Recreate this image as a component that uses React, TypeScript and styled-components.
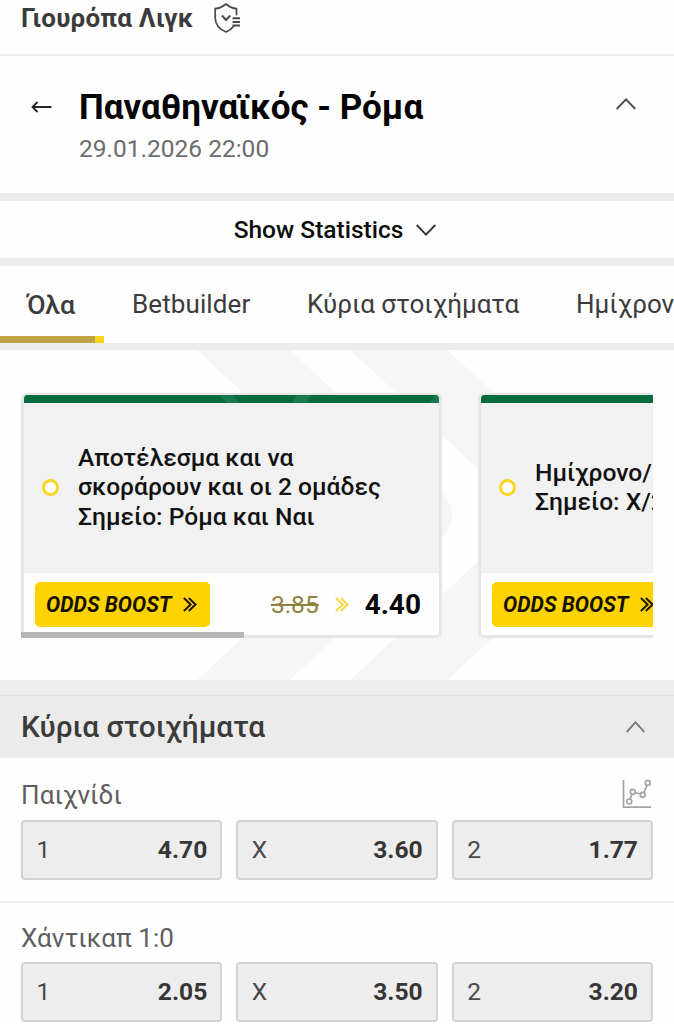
import React from "react";
import styled, { createGlobalStyle, css } from "styled-components";

const GlobalStyle = createGlobalStyle`
  * { box-sizing: border-box; }
  html, body { margin: 0; padding: 0; background: #fefefe; }
  body { font-family: Roboto, "Liberation Sans", sans-serif; color: #3b3b3b; overflow: hidden; }
  svg { display: block; flex: none; }
`;

const Page = styled.main`
  width: 674px;
  height: 1024px;
  overflow: hidden;
  display: flex;
  flex-direction: column;
  background: #fefefe;
`;

const Text = styled.span<{ $size: number; $weight?: number; $color?: string; $spacing?: number }>`
  font-size: ${(p) => p.$size}px;
  font-weight: ${(p) => p.$weight ?? 400};
  color: ${(p) => p.$color ?? "#3b3b3b"};
  letter-spacing: ${(p) => p.$spacing ?? 0}px;
  white-space: nowrap;
`;

const LeagueBar = styled.header`
  flex: none;
  height: 56px;
  padding: 0 0 18px 21px;
  display: flex;
  align-items: center;
  gap: 21px;
  border-bottom: 2px solid #ececec;
`;

const MatchHeader = styled.section`
  flex: none;
  height: 137px;
  padding: 31px 38px 0 31px;
  display: flex;
  align-items: flex-start;
`;

const BackButton = styled.div`
  width: 48px;
  padding-top: 12px;
`;

const MatchInfo = styled.div`
  flex: 1;
  display: flex;
  flex-direction: column;
`;

const MatchTitle = styled.h1`
  margin: 1px 0 0;
  font-size: 35px;
  line-height: 40px;
  font-weight: 700;
  color: #050505;
  white-space: nowrap;
`;

const MatchDate = styled.div`
  margin-top: 7px;
  font-size: 24.5px;
  line-height: 28px;
  color: #6c6c6c;
`;

const CollapseSlot = styled.div`
  padding-top: 11px;
`;

const Divider = styled.div<{ $height: number }>`
  flex: none;
  height: ${(p) => p.$height}px;
  background: #ececec;
`;

const StatsToggle = styled.section`
  flex: none;
  height: 57px;
  display: flex;
  align-items: center;
  justify-content: center;
  gap: 13px;
  padding-right: 4px;
`;

const TabBar = styled.nav`
  flex: none;
  height: 77px;
  display: flex;
  overflow: hidden;
`;

const Tab = styled.div<{ $width: number; $active?: boolean }>`
  flex: none;
  width: ${(p) => p.$width}px;
  height: 77px;
  padding: 0 0 1px 28px;
  display: flex;
  align-items: center;
  ${(p) => p.$active && css`
    border-bottom: 7px solid;
    border-image: linear-gradient(to right, #bfa445 94px, #fbd51d 94px) 1;
    padding: 6px 0 0 27px;
  `}
`;

const Carousel = styled.section`
  flex: none;
  position: relative;
  height: 330px;
  padding: 43px 21px 0;
`;

const Watermark = styled.svg`
  position: absolute;
  inset: 0;
`;

const CardTrack = styled.div`
  position: relative;
  display: flex;
  gap: 36px;
  overflow: hidden;
`;

const Card = styled.article`
  flex: none;
  width: 421px;
  height: 245px;
  border: 3px solid #e6e6e6;
  border-top-width: 2px;
  border-radius: 6px;
  overflow: hidden;
  display: flex;
  flex-direction: column;
  background: #fefefe;
`;

const CardAccent = styled.div`
  flex: none;
  height: 8px;
  background: #056c3b;
`;

const CardBody = styled.div`
  flex: none;
  height: 170px;
  padding: 0 0 2px 18px;
  display: flex;
  align-items: center;
  gap: 19px;
  background: #f1f1f1;
`;

const Dot = styled.div`
  flex: none;
  width: 17px;
  height: 17px;
  border: 3px solid #fbd51d;
  border-radius: 50%;
  background: #fff;
`;

const CardLines = styled.div`
  display: flex;
  flex-direction: column;
  line-height: 29.4px;
`;

const CardFooter = styled.div`
  flex: 1;
  padding: 0 18px 0 11px;
  display: flex;
  align-items: center;
  justify-content: space-between;
`;

const BoostBadge = styled.div`
  width: 175px;
  height: 45px;
  padding-left: 11px;
  border-radius: 5px;
  background: #ffd300;
  display: flex;
  align-items: center;
  gap: 11px;
  font-size: 21.2px;
  font-weight: 700;
  font-style: italic;
  color: #141000;
  white-space: nowrap;
`;

const PriceChange = styled.div`
  display: flex;
  align-items: center;
  gap: 16px;
`;

const OldPrice = styled.span`
  font-size: 24.5px;
  color: #8f8240;
  text-decoration: line-through;
  text-decoration-thickness: 2px;
`;

const ScrollThumb = styled.div`
  position: absolute;
  left: 0;
  bottom: 0;
  width: 223px;
  height: 6px;
  background: #b5b5b5;
`;

const GroupHeader = styled.section`
  flex: none;
  height: 63px;
  padding: 0 29px 0 21px;
  border-top: 1px solid #e0e0e0;
  border-bottom: 1px solid #f0f0f0;
  background: #ebebeb;
  display: flex;
  align-items: center;
  justify-content: space-between;
`;

const Market = styled.section<{ $height: number; $labelHeight: number }>`
  flex: none;
  height: ${(p) => p.$height}px;
  padding: 0 21px;
  display: grid;
  grid-template-rows: ${(p) => p.$labelHeight}px 60px;
  border-bottom: 2px solid #eee;
`;

const MarketLabel = styled.div`
  padding: 11px 2px 0 0;
  display: flex;
  align-items: center;
  justify-content: space-between;

  svg { margin-bottom: 2px; }
`;

const OddsRow = styled.div`
  display: grid;
  grid-template-columns: repeat(3, 1fr);
  gap: 14px;
`;

const OddsButton = styled.div`
  padding: 0 13px 2px 13.5px;
  border: 2px solid #d2d2d2;
  border-radius: 4px;
  background: #ededed;
  display: flex;
  align-items: center;
  justify-content: space-between;
`;

function Chevron({ up, color, width = 20 }: { up?: boolean; color: string; width?: number }) {
  return (
    <svg width={width} height={12} viewBox="0 0 20 12" preserveAspectRatio="none" fill="none" stroke={color} strokeWidth={1.9}>
      <path d={up ? "M.7 11 10 1.4 19.3 11" : "M.7 1 10 10.6 19.3 1"} />
    </svg>
  );
}

function DoubleChevron({ color }: { color: string }) {
  return (
    <svg width="14" height="15" viewBox="0 0 14 15" fill="none" stroke={color} strokeWidth="2">
      <path d="M.9 1 7.600 7.500.9 14M5.800 1 12.500 7.500 5.800 14" />
    </svg>
  );
}

function ShieldIcon() {
  return (
    <svg width="27" height="30" viewBox="0 0 27 30" fill="none" stroke="#4a4a4a" strokeWidth="1.7">
      <path d="M22.500 12.200V5.600C18.700 5.400 15 3.500 12 1 9 3.500 5.300 5.400 1.200 5.600V14.500C1.200 21.500 6 26.500 12 29 15.500 27.600 18.400 25.300 20.300 22.600" />
      <path d="M8 12.500 12 17 16.200 12.500" strokeWidth="1.900" />
      <path d="M18.500 15.200H26M18.500 18.900H26M18.500 22.600H26" strokeWidth="2" />
    </svg>
  );
}

function TrendIcon() {
  return (
    <svg width="29" height="30" viewBox="0 0 29 30" fill="none" stroke="#a3a3a3" strokeWidth="1.700">
      <path d="M1.500 1V28.200H29" />
      <path d="M8 19.900 10 15M13 13.500 18.300 15M21.900 13.500 25.200 6" />
      <circle cx="7.200" cy="22.500" r="2.500" />
      <circle cx="10.700" cy="12.800" r="2.500" />
      <circle cx="20.800" cy="15.800" r="2.500" />
      <circle cx="25.800" cy="3.900" r="2.500" />
    </svg>
  );
}

function BoostCard({ lines, oldPrice, price, shine }: {
  lines: string[]; oldPrice?: string; price?: string; shine?: boolean;
}) {
  return (
    <Card>
      <CardAccent>
        {shine && (
          <svg width="415" height="8" viewBox="0 0 415 8" fill="#fff" fillOpacity=".09">
            <path d="M195 0H208L216 8H203ZM273 0H286L283 8H268ZM406 8 411 0H415V8Z" />
          </svg>
        )}
      </CardAccent>
      <CardBody>
        <Dot />
        <CardLines>
          {lines.map((line) => (
            <Text key={line} $size={24.6} $weight={500} $color="#111">{line}</Text>
          ))}
        </CardLines>
      </CardBody>
      <CardFooter>
        <BoostBadge>
          ODDS BOOST
          <DoubleChevron color="#1d1800" />
        </BoostBadge>
        {price && (
          <PriceChange>
            <OldPrice>{oldPrice}</OldPrice>
            <DoubleChevron color="#f5d83c" />
            <Text $size={28} $weight={700} $color="#050505">{price}</Text>
          </PriceChange>
        )}
      </CardFooter>
    </Card>
  );
}

function MarketBlock({ name, odds, chart, height, labelHeight }: {
  name: string; odds: [string, string][]; chart?: boolean; height: number; labelHeight: number;
}) {
  return (
    <Market $height={height} $labelHeight={labelHeight}>
      <MarketLabel>
        <Text $size={26} $color="#5e5e5e" $spacing={0.08}>{name}</Text>
        {chart && <TrendIcon />}
      </MarketLabel>
      <OddsRow>
        {odds.map(([pick, value]) => (
          <OddsButton key={pick}>
            <Text $size={24.5} $color="#484848">{pick}</Text>
            <Text $size={24.6} $weight={700} $color="#363636">{value}</Text>
          </OddsButton>
        ))}
      </OddsRow>
    </Market>
  );
}

export default function App() {
  return (
    <Page>
      <GlobalStyle />
      <LeagueBar>
        <Text $size={26} $weight={700} $spacing={0.2}>Γιουρόπα Λιγκ</Text>
        <ShieldIcon />
      </LeagueBar>
      <MatchHeader>
        <BackButton>
          <svg width="21" height="16" viewBox="0 0 21 16" fill="none" stroke="#252525" strokeWidth="1.900">
            <path d="M20.500 8H1.500M6.500 3 1.500 8 6.500 13" />
          </svg>
        </BackButton>
        <MatchInfo>
          <MatchTitle>Παναθηναϊκός - Ρόμα</MatchTitle>
          <MatchDate>29.01.2026 22:00</MatchDate>
        </MatchInfo>
        <CollapseSlot><Chevron up color="#4a4a4a" /></CollapseSlot>
      </MatchHeader>
      <Divider $height={8} />
      <StatsToggle>
        <Text $size={24.5} $weight={500} $color="#0c0c0c">Show Statistics</Text>
        <Chevron color="#333" />
      </StatsToggle>
      <Divider $height={8} />
      <TabBar>
        <Tab $width={104} $active><Text $size={26.6} $weight={500}>Όλα</Text></Tab>
        <Tab $width={175}><Text $size={26} $spacing={0.1}>Betbuilder</Text></Tab>
        <Tab $width={269}><Text $size={26}>Κύρια στοιχήματα</Text></Tab>
        <Tab $width={180}><Text $size={26}>Ημίχρονο</Text></Tab>
      </TabBar>
      <Divider $height={7} />
      <Carousel>
        <Watermark width="674" height="330" viewBox="0 0 674 330" fill="#f6f6f6">
          <path d="M197 0H290L440 140Q464 165 440 190L290 330H197L375 165Z" />
          <path d="M350 0H447L601 140Q625 165 601 190L447 330H350L528 165Z" />
        </Watermark>
        <CardTrack>
          <BoostCard
            shine
            lines={["Αποτέλεσμα και να", "σκοράρουν και οι 2 ομάδες", "Σημείο: Ρόμα και Ναι"]}
            oldPrice="3.85"
            price="4.40"
          />
          <BoostCard lines={["Ημίχρονο/", "Σημείο: X/2"]} />
          <ScrollThumb />
        </CardTrack>
      </Carousel>
      <Divider $height={15} />
      <GroupHeader>
        <Text $size={29.8} $weight={500}>Κύρια στοιχήματα</Text>
        <Chevron up color="#777" width={19} />
      </GroupHeader>
      <MarketBlock name="Παιχνίδι" chart height={145} labelHeight={62} odds={[["1", "4.70"], ["X", "3.60"], ["2", "1.77"]]} />
      <MarketBlock name="Χάντικαπ 1:0" height={140} labelHeight={59} odds={[["1", "2.05"], ["X", "3.50"], ["2", "3.20"]]} />
    </Page>
  );
}
